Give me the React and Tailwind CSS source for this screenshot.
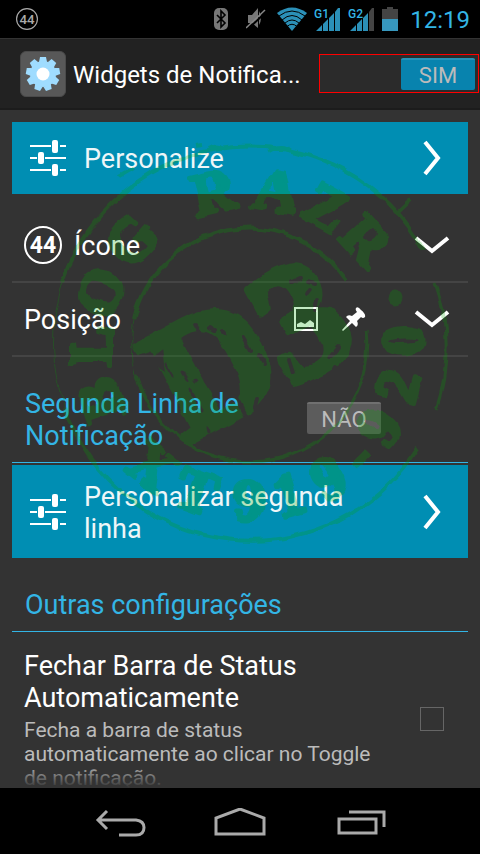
import React, { useState } from "react";

// letters round the stamp, angle is clockwise from the top
const topLetters = [
  { char: "B", angle: -110 },
  { char: "L", angle: -90 },
  { char: "O", angle: -70 },
  { char: "G", angle: -48 },
  { char: "R", angle: -13 },
  { char: "A", angle: 10 },
  { char: "Z", angle: 29 },
  { char: "R", angle: 48 },
];

const bottomLetters = [
  { char: "X", angle: 39 },
  { char: "T", angle: 20 },
  { char: "9", angle: 0 },
  { char: "1", angle: -15 },
  { char: "9", angle: -31 },
  { char: "-", angle: -45 },
  { char: "9", angle: -58 },
  { char: "2", angle: -75 },
  { char: "0", angle: -92 },
];

const Stamp = () => (
  <svg viewBox="0 0 420 460" className="w-[420px] h-[460px]" fill="#00a800" stroke="#00a800" aria-hidden="true">
    <defs>
      <filter id="rough" x="-5%" y="-5%" width="110%" height="110%">
        <feTurbulence type="fractalNoise" baseFrequency="0.06" numOctaves="2" seed="4" result="noise" />
        <feDisplacementMap in="SourceGraphic" in2="noise" scale="7" xChannelSelector="R" yChannelSelector="G" />
      </filter>
      {/* worn spots in the ink */}
      <mask id="worn" maskUnits="userSpaceOnUse" x="0" y="0" width="420" height="460">
        <rect width="420" height="460" fill="white" stroke="none" />
        <g stroke="black" fill="black" strokeLinecap="round">
          <path d="M122 242l-10 8l12 8z M127 254l7 12 M144 262l5 8 M152 280l10 20 M156 270l1 1 M166 272l18 26 M168 318l1 6" strokeWidth="3" />
          <path d="M204 228l8 14 M220 246l5 8 M218 288l-2 10 M170 219l5 3 M183 222l2 2" strokeWidth="4" />
          <path d="M254 172l8 -4 M268 172l8 2 M268 184l3 -4 M278 190l-2 10 M224 208l1 1 M232 202l1 1 M299 236l-8 10 M250 250l4 12 M258 242l2 4 M296 258l-2 4" strokeWidth="4" />
          <path d="M156 214L212 316" strokeWidth="4" />
        </g>
      </mask>
    </defs>
    <g opacity="0.23">
      <g filter="url(#rough)">
        <path d="M24 172 A197 197 0 0 1 385 141" fill="none" strokeWidth="4" />
        <path d="M24 172 A197 197 0 0 0 26 299" fill="none" strokeWidth="1" />
        <path d="M26 299 A197 197 0 0 0 379 338" fill="none" strokeWidth="4" />
        <path d="M396 172 A197 197 0 0 1 397 300" fill="none" strokeWidth="3" />
        <path d="M95 210 A118 118 0 0 1 308 171" fill="none" strokeWidth="4" />
        <path d="M328 220 A118 118 0 0 1 97 265" fill="none" strokeWidth="3" />
        <path d="M97 265 A118 118 0 0 1 95 210" fill="none" strokeWidth="1" />
        <path d="M80 66 L94 58 M158 35 l6 -1 M170 39 q8 -5 14 0 M230 41 q14 -8 22 0 M357 104 L372 90" strokeWidth="4" />
        <circle cx="357" cy="188" r="7" />
        <g mask="url(#worn)">
          <text
            x="208"
            y="293"
            textAnchor="middle"
            transform="rotate(-28 208 236)"
            fontFamily="Liberation Serif, serif"
            fontWeight="700"
            fontSize="165"
            strokeWidth="8"
            strokeLinejoin="round"
          >
            D3
          </text>
        </g>
        <g fontFamily="Liberation Serif, serif" fontWeight="700" fontSize="60" textAnchor="middle" strokeWidth="4" strokeLinejoin="round">
          {topLetters.map((l) => (
            <text key={l.angle} x="210" y="98" transform={`rotate(${l.angle} 210 236)`}>{l.char}</text>
          ))}
          {bottomLetters.map((l) => (
            <text key={l.angle} x="210" y="410" transform={`rotate(${l.angle} 210 236)`}>{l.char}</text>
          ))}
        </g>
      </g>
    </g>
  </svg>
);

const Badge44 = ({ className, weight }) => (
  <svg viewBox="0 0 38 38" className={className} fill="none" stroke="currentColor" aria-hidden="true">
    <circle cx="19" cy="19" r="18" strokeWidth="2" />
    <text
      x="19"
      y="27"
      textAnchor="middle"
      fontFamily="Roboto, sans-serif"
      fontWeight={weight}
      fontSize="23"
      fill="currentColor"
      stroke="none"
    >
      44
    </text>
  </svg>
);

const Sliders = () => (
  <svg viewBox="0 0 36 36" className="w-9 h-9 shrink-0" fill="white" aria-hidden="true">
    <path d="M0 5h21v2H0zM30 5h6v2h-6zM0 17h7v2H0zM15 17h21v2H15zM0 29h21v2H0zM30 29h6v2h-6z" />
    <rect x="22" y="0" width="6" height="13" rx="2" />
    <rect x="8" y="12" width="6" height="12" rx="2" />
    <rect x="22" y="24" width="6" height="12" rx="2" />
  </svg>
);

const ChevronRight = () => (
  <svg viewBox="0 0 20 36" className="w-5 h-9 shrink-0" fill="none" stroke="white" strokeWidth="4" aria-hidden="true">
    <path d="M3 2l13 16L3 34" />
  </svg>
);

const ChevronDown = () => (
  <svg viewBox="0 0 36 20" className="w-9 h-5 shrink-0" fill="none" stroke="white" strokeWidth="4" aria-hidden="true">
    <path d="M2 3l16 13L34 3" />
  </svg>
);

const Signal = ({ label, bars }) => (
  <svg viewBox="0 0 28 26" className="w-7 h-[26px]" aria-hidden="true">
    <text x="0" y="12" fontFamily="Roboto, sans-serif" fontWeight="500" fontSize="12" fill="#33b5e5">{label}</text>
    <path d="M2 25 L8 19 V25z M9 18 L14 13 V25 H9z M15 12 L20 7 V25 H15z" fill="#2b90b8" />
    <path d="M21 6 L24 2 H26 V25 H21z" fill={bars === 4 ? "#2b90b8" : "#444"} />
  </svg>
);

const StatusBar = () => (
  <div className="h-[38px] shrink-0 bg-black flex items-center justify-between pl-4 pr-[10px]">
    <Badge44 className="w-[22px] h-[22px] text-[#aaa]" weight="500" />
    <div className="flex items-center">
      <svg viewBox="0 0 16 24" className="w-4 h-6" aria-hidden="true">
        <rect x="1" y="1" width="14" height="22" rx="5" fill="#777" />
        <path d="M4 8l8 8-4 4V4l4 4-8 8" fill="none" stroke="black" strokeWidth="1.6" />
      </svg>
      <svg viewBox="0 0 20 22" className="w-5 h-[22px] ml-[17px]" aria-hidden="true">
        <path d="M2 7h4l6-7v20l-6-5H2z M13 3q4 7 0 14z" fill="#777" />
        <path d="M1 22L20 4" stroke="black" strokeWidth="2" />
        <path d="M0 20L19 2" stroke="#888" strokeWidth="1.5" />
      </svg>
      <svg viewBox="0 0 30 24" className="w-[30px] h-6 ml-[11px]" aria-hidden="true">
        <path d="M0 6 Q15 -5 30 6 L15 24z" fill="#2b90b8" />
        <g fill="none" stroke="black" strokeWidth="1">
          <path d="M2 9Q15 -1 28 9M5 13Q15 4 25 13M8 16Q15 10 22 16M10 19.500Q15 15 20 19.500" />
        </g>
      </svg>
      <div className="flex ml-[7px] gap-[6px]">
        <Signal label="G1" bars={4} />
        <Signal label="G2" bars={3} />
      </div>
      <svg viewBox="0 0 16 24" className="w-4 h-6 ml-[6px]" aria-hidden="true">
        <path d="M5 0h6v2h5v10H0V2h5z" fill="#444" />
        <rect y="12" width="16" height="12" fill="#3797bd" />
      </svg>
      <span className="ml-3 pt-[2px] text-[24px] leading-8 text-[#33b5e5]">12:19</span>
    </div>
  </div>
);

const GearIcon = () => (
  <div className="w-[46px] h-[46px] shrink-0 rounded-md bg-[#585858] border border-[#4a4a4a] flex items-center justify-center">
    <svg viewBox="-18 -18 36 36" className="w-9 h-9" aria-hidden="true">
      <g fill="#9fdcff">
        <circle r="13" />
        {[0, 40, 80, 120, 160, 200, 240, 280, 320].map((a) => (
          <path key={a} d="M-4 -12L-3 -17H3L4 -12z" transform={`rotate(${a})`} />
        ))}
      </g>
      <circle r="6.500" fill="white" />
    </svg>
  </div>
);

const ActionButton = ({ children, className }) => (
  <button
    type="button"
    className={`w-full bg-[#008eb3] flex items-center pl-[18px] pr-[26px] text-left text-[27px] leading-8 text-[#eef6f8] ${className}`}
  >
    <Sliders />
    <span className="flex-1 ml-[18px] pr-10 pt-[2px]">{children}</span>
    <ChevronRight />
  </button>
);

const Row = ({ children }) => (
  <button
    type="button"
    className="w-full h-[74px] border-b-2 border-[#444] flex items-center pl-3 pr-[18px] text-left text-[27px] leading-8 text-white"
  >
    {children}
  </button>
);

export default function App() {
  const [active, setActive] = useState(true);
  const [secondLine, setSecondLine] = useState(false);

  return (
    <div className="h-dvh flex flex-col bg-black font-[Roboto,sans-serif] overflow-hidden">
      <StatusBar />

      <header className="h-[72px] shrink-0 bg-[#222] border-t border-t-[#333] border-b-2 border-b-[#1c1c1c] flex items-center pl-5">
        <GearIcon />
        <h1 className="flex-1 ml-[7px] pt-[2px] whitespace-nowrap text-[24px] leading-8 text-white">Widgets de Notifica...</h1>
        <button
          type="button"
          role="switch"
          aria-checked={active}
          onClick={() => setActive(!active)}
          className={`w-40 h-[39px] shrink-0 mr-px border border-[#f00] bg-[#2b2b2b] p-[3px] flex ${active ? "justify-end" : "justify-start"}`}
        >
          <span className="w-[74px] h-8 rounded-xs bg-[#0883ae] border-t-2 border-[#2592b8] text-[22px] leading-8 text-[#bbb] text-center">
            {active ? "SIM" : "NÃO"}
          </span>
        </button>
      </header>

      <main className="relative flex-1 min-h-0 overflow-hidden bg-[#333] px-3 pt-3">
        <ActionButton className="h-[72px]">Personalize</ActionButton>

        <div className="mt-[15px]">
          <Row>
            <Badge44 className="w-[38px] h-[38px]" weight="700" />
            <span className="flex-1 ml-3 pt-[2px]">Ícone</span>
            <ChevronDown />
          </Row>
          <Row>
            <span className="flex-1 pt-[2px]">Posição</span>
            <svg viewBox="0 0 24 24" className="w-6 h-6" aria-hidden="true">
              <rect x="1" y="1" width="22" height="22" fill="none" stroke="white" strokeWidth="2" />
              <path d="M3 20v-3l4-2 4 2 5-4 4 3v4z" fill="white" />
            </svg>
            <svg viewBox="0 0 24 24" className="w-6 h-6 ml-6 mr-12" fill="white" aria-hidden="true">
              <path d="M14 1q2-2 5 2q5 4 4 7q-2 2-4 0l-4 4q2 4-1 6l-4-4-9 8-1-1 8-9-4-4q2-3 6-1l5-4q-2-2-1-4z" />
            </svg>
            <ChevronDown />
          </Row>
        </div>

        <section className="pt-[31px] pb-[10px] pl-[13px] pr-[87px] border-b border-[#33b5e5] flex items-center justify-between">
          <h2 className="w-60 text-[27px] leading-8 text-[#33b5e5]">Segunda Linha de Notificação</h2>
          <button
            type="button"
            role="switch"
            aria-checked={secondLine}
            onClick={() => setSecondLine(!secondLine)}
            className="w-[74px] h-8 mb-1 rounded-xs bg-[#5c5c5c] border-t-2 border-[#707070] text-[22px] leading-8 text-[#bbb] text-center"
          >
            {secondLine ? "SIM" : "NÃO"}
          </button>
        </section>

        <ActionButton className="mt-[2px] h-[93px]">Personalizar segunda linha</ActionButton>

        <h2 className="pt-[31px] pb-[10px] pl-[13px] border-b border-[#33b5e5] text-[27px] leading-8 text-[#33b5e5]">
          Outras configurações
        </h2>

        <label className="flex items-center pt-[18px] pl-3 pr-6">
          <span className="flex-1 pr-8">
            <span className="block text-[27px] leading-8 text-white">Fechar Barra de Status Automaticamente</span>
            <span className="block mt-1 text-[21px] leading-6 text-[#bbb]">
              Fecha a barra de status automaticamente ao clicar no Toggle de notificação.
            </span>
          </span>
          <input type="checkbox" className="appearance-none w-6 h-6 mb-[2px] border border-[#666] checked:bg-[#33b5e5]" />
        </label>

        {/* watermark over the list */}
        <div className="absolute top-0 inset-x-0 flex justify-center pl-[17px] pointer-events-none">
          <Stamp />
        </div>
        <div className="absolute bottom-0 inset-x-0 h-6 bg-linear-to-b from-transparent to-[#333] pointer-events-none" />
      </main>

      <nav className="h-[66px] shrink-0 bg-black flex items-center justify-center gap-[66px] pt-1">
        <button type="button" aria-label="Voltar">
          <svg viewBox="0 0 54 30" className="w-[54px] h-[30px]" fill="none" stroke="#aaa" strokeWidth="3" aria-hidden="true">
            <path d="M14 3L5 12L14 21M5 12H43Q51 13 51 19.500Q51 27 43 27H26" />
          </svg>
        </button>
        <button type="button" aria-label="Início">
          <svg viewBox="0 0 54 30" className="w-[54px] h-[30px]" fill="none" stroke="#aaa" strokeWidth="3" aria-hidden="true">
            <path d="M3 26V10L27 1L51 10V26z" />
          </svg>
        </button>
        <button type="button" aria-label="Recentes">
          <svg viewBox="0 0 54 30" className="w-[54px] h-[30px]" fill="none" stroke="#aaa" strokeWidth="3" aria-hidden="true">
            <path d="M6 11H43V25H6zM16 4H51V19" />
          </svg>
        </button>
      </nav>
    </div>
  );
}
